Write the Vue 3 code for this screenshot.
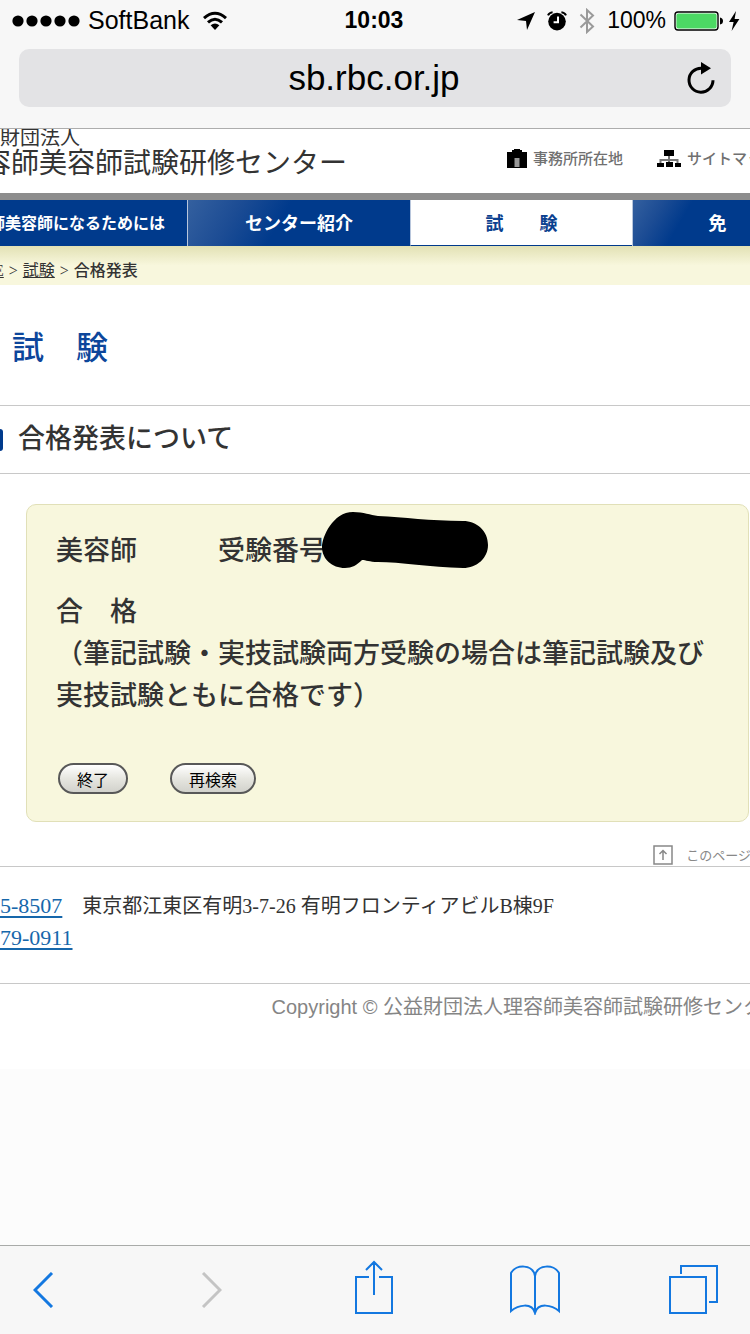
<script setup>
import { ref } from 'vue'

const address = ref('sb.rbc.or.jp')

const navItems = [
  { id: 1, label: '師美容師になるためには', type: 'first' },
  { id: 2, label: 'センター紹介', type: 'normal' },
  { id: 3, label: '試　　験', type: 'active' },
  { id: 4, label: '免', type: 'last' },
]
</script>

<template>
  <div class="browser">
    <header class="chrome">
      <div class="status-bar">
        <div class="status-left">
          <svg class="signal" viewBox="0 0 68 12" aria-hidden="true">
            <circle v-for="n in 5" :key="n" :cx="n * 14 - 8" cy="6" r="5.6" />
          </svg>
          <span class="carrier">SoftBank</span>
          <svg class="wifi" viewBox="0 0 26 20" aria-hidden="true">
            <path d="M2 7.2Q13-2.6 24 7.2" />
            <path d="M6 11.4Q13 5 20 11.4" />
            <path class="solid" d="M8.6 14.2Q13 10.6 17.4 14.2L13 19Z" />
          </svg>
        </div>
        <span class="clock">10:03</span>
        <div class="status-right">
          <svg class="location" viewBox="0 0 18 18" aria-hidden="true">
            <path d="M18 0L10 18L9 9L0 8Z" />
          </svg>
          <svg class="alarm" viewBox="0 0 20 20" aria-hidden="true">
            <circle cx="10" cy="10.6" r="8.8" />
            <path class="bell" d="M1 4.4Q2.2 1.6 5.6 1.2M19 4.4Q17.8 1.6 14.4 1.2" />
            <path class="hands" d="M11 5.6V11.2H6.6" />
          </svg>
          <svg class="bluetooth" viewBox="0 0 16 26" aria-hidden="true">
            <path d="M1.5 6.5L14 18.5L8 24V2L14 7.5L1.5 19.5" />
          </svg>
          <span class="percent">100%</span>
          <svg class="battery" viewBox="0 0 50 20" aria-hidden="true">
            <rect class="case" x="1" y="1" width="43" height="18" rx="3" />
            <rect class="level" x="2.4" y="2.4" width="40.2" height="15.2" rx="2" />
            <path d="M46 6.5Q49 7 49 10Q49 13 46 13.5Z" />
          </svg>
          <svg class="bolt" viewBox="0 0 12 20" aria-hidden="true">
            <path d="M8 0L1 11H5.6L3.6 20L11.4 8H6.6Z" />
          </svg>
        </div>
      </div>

      <form class="address-bar" @submit.prevent>
        <input v-model="address" type="text" aria-label="アドレス" />
        <button type="submit" aria-label="再読み込み">
          <svg viewBox="0 0 28 32" aria-hidden="true">
            <path class="arc" d="M14.5 6.2A12 12 0 1 0 26 18.2" />
            <path d="M14 0L24 6.2L14 12.4Z" />
          </svg>
        </button>
      </form>
    </header>

    <main class="page">
      <div class="site-header">
        <div class="site-name">
          <p>財団法人</p>
          <h1>容師美容師試験研修センター</h1>
        </div>
        <div class="site-links">
          <a href="#office">
            <svg viewBox="0 0 20 19" aria-hidden="true">
              <path d="M0 3H5V1H7V0H13V1H15V3H20V19H0Z" />
              <path class="door" d="M7.5 9H12.5V18H7.5Z" />
            </svg>
            事務所所在地
          </a>
          <a href="#sitemap">
            <svg class="tree" viewBox="0 0 24 18" aria-hidden="true">
              <path class="branch" d="M12 5V13M3.5 14V11H20.5V14" />
              <path d="M7 1H17V7H7ZM0 14H7V18H0ZM9 13H16V18H9ZM18 14H24V18H18Z" />
            </svg>
            サイトマッ
          </a>
        </div>
      </div>

      <nav class="main-nav">
        <a v-for="item in navItems" :key="item.id" :href="'#nav' + item.id" :class="item.type">{{ item.label }}</a>
      </nav>

      <div class="breadcrumb">
        <a href="#home">E</a> <span>&gt;</span> <a href="#exam">試験</a> <span>&gt;</span> <strong>合格発表</strong>
      </div>

      <h2 class="section-title">試　験</h2>

      <h3 class="sub-title">合格発表について</h3>

      <section class="result">
        <p class="examinee">
          美容師　　　受験番号<span class="number">
            <svg viewBox="0 0 166 56" aria-hidden="true">
              <path d="M0 35C0 25 11 0 31 0C42 0 48 3 56 4C82 5 108 9 141 9C155 9 166 19 166 33C166 46 155 56 141 56C108 55 78 50 56 50C47 50 44 48 40 48C35 53 30 56 23 56C10 56 0 47 0 35Z" />
            </svg>
          </span>
        </p>
        <p>合　格<br />（筆記試験・実技試験両方受験の場合は筆記試験及び実技試験ともに合格です）</p>
        <div class="actions">
          <button type="button">終了</button>
          <button type="button">再検索</button>
        </div>
      </section>

      <div class="page-top">
        <a href="#top">
          <svg viewBox="0 0 20 20" aria-hidden="true">
            <path d="M1 1H19V19H1ZM10 15V5.5M6.5 9L10 5.5L13.5 9" />
          </svg>
          このページ
        </a>
      </div>

      <address class="contact">
        <p><a href="#zip">5-8507</a>　東京都江東区有明3-7-26 有明フロンティアビルB棟9F</p>
        <p><a href="#tel">79-0911</a></p>
      </address>

      <footer class="copyright">Copyright © 公益財団法人理容師美容師試験研修センタ</footer>
    </main>

    <div class="toolbar">
      <button type="button" class="arrow" aria-label="戻る">
        <svg width="21" height="36" viewBox="0 0 21 36"><path d="M19 1L2 18L19 35" /></svg>
      </button>
      <button type="button" class="arrow" aria-label="進む" disabled>
        <svg width="21" height="36" viewBox="0 0 21 36"><path d="M2 1L19 18L2 35" /></svg>
      </button>
      <button type="button" aria-label="共有">
        <svg width="38" height="60" viewBox="0 0 38 60">
          <path d="M14 17H1V53H37V17H24M19 35V2M11 10L19 2L27 10" />
        </svg>
      </button>
      <button type="button" aria-label="ブックマーク">
        <svg width="50" height="50" viewBox="0 0 50 50">
          <path d="M25 48V11C23 -1 6 -1 1 8V46C8 40 22 37 25 48C28 37 42 40 49 46V8C44 -1 27 -1 25 11" />
        </svg>
      </button>
      <button type="button" aria-label="タブ">
        <svg width="50" height="52" viewBox="0 0 50 52">
          <path d="M1 13H37V49H1ZM12 10V2H48V38H40" />
        </svg>
      </button>
    </div>
  </div>
</template>

<style>
body {
  margin: 0;
}
</style>

<style scoped>
.browser {
  display: flex;
  flex-direction: column;
  min-height: 100vh;
  overflow: hidden;
  background: #fcfcfc;
  color: #333333;
  font-family: "Liberation Serif", "Noto Sans CJK JP", serif;
}

p,
h1,
h2,
h3 {
  margin: 0;
}

button {
  cursor: pointer;
}

svg {
  display: block;
  flex: none;
}

.chrome {
  padding-bottom: 21px;
  border-bottom: 1px solid #adadad;
  background: #f7f7f7;
  color: #000000;
  font-family: "Liberation Sans", "Noto Sans CJK JP", sans-serif;
}

.status-bar {
  display: grid;
  grid-template-columns: 1fr auto 1fr;
  align-items: center;
  height: 41px;
  padding: 0 10px 0 12px;
  font-size: 23px;
}

.status-left,
.status-right {
  display: flex;
  align-items: center;
}

.status-right {
  justify-content: flex-end;
}

.signal {
  width: 68px;
  height: 12px;
  margin-right: 8px;
}

.carrier {
  font-size: 25px;
}

.wifi {
  width: 26px;
  height: 20px;
  margin-left: 13px;
  fill: none;
  stroke: #000000;
  stroke-width: 3;
}

.wifi .solid {
  fill: #000000;
  stroke: none;
}

.clock {
  padding-right: 4px;
  font-weight: 700;
}

.location {
  width: 18px;
  height: 18px;
}

.alarm {
  width: 20px;
  height: 20px;
  margin-left: 12px;
}

.bell,
.hands {
  fill: none;
  stroke: #000000;
  stroke-width: 2;
}

.hands {
  stroke: #ffffff;
}

.bluetooth {
  width: 16px;
  height: 26px;
  margin: 0 12px;
  fill: none;
  stroke: #9a9a9a;
  stroke-width: 2;
}

.battery {
  width: 50px;
  height: 20px;
  margin-left: 8px;
}

.case {
  fill: #ffffff;
  stroke: #000000;
  stroke-width: 1.4;
}

.level {
  fill: #4cd964;
}

.bolt {
  width: 12px;
  height: 20px;
  margin-left: 4px;
}

.address-bar {
  display: flex;
  align-items: center;
  height: 58px;
  margin: 8px 19px 0;
  padding: 0 16px 0 42px;
  border-radius: 10px;
  background: #e3e3e5;
}

.address-bar input {
  flex: 1;
  min-width: 0;
  padding: 0;
  border: 0;
  outline: none;
  background: transparent;
  color: #000000;
  font-family: inherit;
  font-size: 35px;
  text-align: center;
}

.address-bar button {
  padding: 0;
  border: 0;
  background: transparent;
}

.address-bar svg {
  width: 28px;
  height: 32px;
}

.arc {
  fill: none;
  stroke: #000000;
  stroke-width: 3;
}

.page {
  padding-bottom: 47px;
  background: #ffffff;
}

.site-header {
  display: flex;
  align-items: flex-start;
  justify-content: space-between;
  height: 64px;
  overflow: hidden;
  font-family: "Noto Sans CJK JP", sans-serif;
  white-space: nowrap;
}

.site-name p {
  font-size: 20px;
  line-height: 15px;
}

.site-name h1 {
  margin-left: -17px;
  font-size: 28px;
  font-weight: 400;
  line-height: 34px;
}

.site-links {
  display: flex;
  gap: 34px;
  margin-right: -12px;
  padding-top: 18px;
}

.site-links a {
  display: flex;
  align-items: center;
  gap: 6px;
  color: #707070;
  font-size: 15px;
  font-weight: 500;
  line-height: 22px;
  text-decoration: none;
}

.site-links svg {
  width: 20px;
  height: 19px;
  fill: #000000;
}

.site-links .tree {
  width: 24px;
  height: 18px;
}

.site-links .door {
  fill: #999999;
}

.site-links .branch {
  fill: none;
  stroke: #777777;
  stroke-width: 2;
}

.main-nav {
  display: grid;
  grid-template-columns: minmax(0, 187fr) minmax(0, 223fr) minmax(0, 222fr) minmax(0, 118fr);
  border-top: 7px solid #8d8d8d;
  background: #003a8c;
  font-family: "Noto Sans CJK JP", sans-serif;
}

.main-nav a {
  box-sizing: border-box;
  height: 46px;
  overflow: hidden;
  border-left: 1px solid #b8c6dc;
  background: linear-gradient(120deg, #34609f 0%, #1c4c94 22%, #003a8c 42%);
  color: #ffffff;
  font-size: 18px;
  font-weight: 700;
  line-height: 44px;
  text-align: center;
  text-decoration: none;
  white-space: nowrap;
}

.main-nav .first {
  display: flex;
  justify-content: flex-end;
  padding-right: 22px;
  border-left: 0;
  background: #003a8c;
  font-size: 16px;
}

.main-nav .active {
  border-bottom: 1px solid #003a8c;
  background: #ffffff;
  color: #0b418f;
}

.main-nav .last {
  padding-left: 52px;
}

.breadcrumb {
  height: 39px;
  margin-left: -6px;
  overflow: hidden;
  background: linear-gradient(180deg, #e2e1b4 0%, #f8f7dd 50%);
  font-size: 16px;
  line-height: 50px;
  white-space: nowrap;
}

.breadcrumb a {
  color: #333333;
}

.breadcrumb span {
  padding: 0 1px;
}

.breadcrumb strong {
  font-weight: 500;
}

.section-title {
  padding: 35px 12px;
  color: #0d469b;
  font-family: "Noto Sans CJK JP", sans-serif;
  font-size: 32px;
  font-weight: 500;
  line-height: 50px;
}

.sub-title {
  display: flex;
  align-items: center;
  gap: 15px;
  border-top: 1px solid #c8c8c8;
  border-bottom: 1px solid #c8c8c8;
  font-size: 27px;
  font-weight: 500;
  line-height: 67px;
}

.sub-title::before {
  content: "";
  width: 3px;
  height: 22px;
  border-radius: 0 4px 4px 0;
  background: #003a8c;
}

.result {
  margin: 30px 1px 0 26px;
  padding: 25px 30px 27px 29px;
  border: 1px solid #e1e0b8;
  border-radius: 10px;
  background: #f8f7dd;
  font-size: 27px;
  font-weight: 500;
  line-height: 42px;
}

.examinee {
  margin-bottom: 19px;
}

.number {
  position: relative;
}

.number svg {
  position: absolute;
  top: -24px;
  left: -4px;
  width: 166px;
  height: 56px;
  fill: #000000;
}

.actions {
  display: flex;
  gap: 42px;
  margin-top: 46px;
  padding-left: 2px;
}

.actions button {
  height: 31px;
  padding: 0 17px;
  border: 2px solid #585858;
  border-radius: 16px;
  background: linear-gradient(180deg, #ffffff 0%, #e6e6e0 50%, #d2d2cc 100%);
  color: #000000;
  font-family: "Noto Sans CJK JP", sans-serif;
  font-size: 16px;
  line-height: 24px;
}

.page-top {
  display: flex;
  justify-content: flex-end;
  margin-top: 23px;
  padding-bottom: 1px;
  border-bottom: 1px solid #c8c8c8;
}

.page-top a {
  display: flex;
  align-items: center;
  gap: 13px;
  margin-right: -1px;
  color: #888888;
  font-family: "Noto Sans CJK JP", sans-serif;
  font-size: 13px;
  line-height: 20px;
  text-decoration: none;
  white-space: nowrap;
}

.page-top svg {
  width: 20px;
  height: 20px;
  fill: none;
  stroke: #888888;
  stroke-width: 1.5;
}

.contact {
  padding: 23px 0 29px;
  border-bottom: 1px solid #c8c8c8;
  font-size: 20px;
  font-style: normal;
  line-height: 31px;
  white-space: nowrap;
}

.contact a {
  color: #1667ab;
  font-size: 22px;
  text-underline-offset: 3px;
}

.copyright {
  margin-right: -13px;
  padding-top: 8px;
  color: #858585;
  font-family: "Liberation Sans", "Noto Sans CJK JP", sans-serif;
  font-size: 20px;
  line-height: 30px;
  text-align: right;
  white-space: nowrap;
}

.toolbar {
  display: grid;
  grid-template-columns: 168fr 154fr 155fr 159fr 50px;
  align-items: center;
  height: 88px;
  margin-top: auto;
  padding: 0 31px 0 33px;
  border-top: 1px solid #a9aba9;
  background: #f7f7f7;
}

.toolbar button {
  justify-self: start;
  padding: 0;
  border: 0;
  background: transparent;
}

.toolbar svg {
  fill: none;
  stroke: #1478e0;
  stroke-width: 2;
}

.toolbar .arrow svg {
  stroke-width: 3;
}

.toolbar button:disabled svg {
  stroke: #c4c4c4;
}
</style>
